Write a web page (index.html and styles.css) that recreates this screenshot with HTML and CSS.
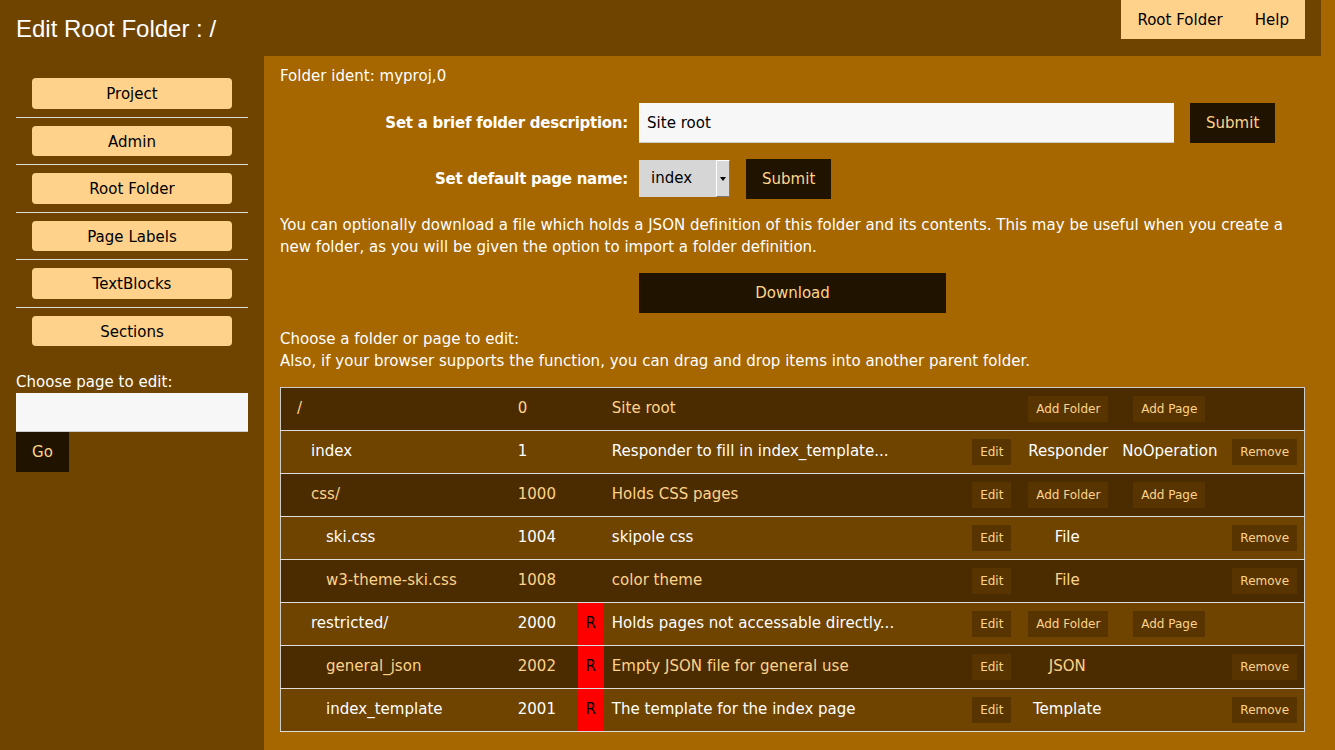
FILE: index.html
```html
<!DOCTYPE html>
<html>
<head>
<meta charset="utf-8">
<title>Edit Root Folder</title>
<link rel="stylesheet" href="styles.css">
</head>
<body>
<div class="page">
  <header class="topbar">
    <h1 class="title">Edit Root Folder : /</h1>
    <nav class="topnav"><a href="#">Root Folder</a><a href="#">Help</a></nav>
  </header>
  <div class="layout">
    <aside class="sidebar">
      <ul class="navlist">
        <li><a class="navbtn" href="#">Project</a></li>
        <li><a class="navbtn" href="#">Admin</a></li>
        <li><a class="navbtn" href="#">Root Folder</a></li>
        <li><a class="navbtn" href="#">Page Labels</a></li>
        <li><a class="navbtn" href="#">TextBlocks</a></li>
        <li><a class="navbtn" href="#">Sections</a></li>
      </ul>
      <div class="choose">
        <div class="choose-label">Choose page to edit:</div>
        <div class="textinput side-input"></div>
        <span class="darkbtn gobtn">Go</span>
      </div>
    </aside>
    <main class="main">
      <div class="ident">Folder ident: myproj,0</div>
      <div class="frow first">
        <div class="flabel">Set a brief folder description:</div>
        <div class="textinput desc-input">Site root</div>
        <span class="darkbtn submit">Submit</span>
      </div>
      <div class="frow">
        <div class="flabel">Set default page name:</div>
        <div class="select"><span class="selval">index</span><span class="selarrow"></span></div>
        <span class="darkbtn submit">Submit</span>
      </div>
      <p class="para para-download">You can optionally download a file which holds a JSON definition of this folder and its contents. This may be useful when you create a new folder, as you will be given the option to import a folder definition.</p>
      <span class="darkbtn download">Download</span>
      <p class="para para-choose">Choose a folder or page to edit:<br>Also, if your browser supports the function, you can drag and drop items into another parent folder.</p>
      <table class="tree">
        <colgroup>
          <col class="c-name"><col class="c-num"><col class="c-r"><col class="c-desc"><col class="c-edit"><col class="c-a"><col class="c-b"><col class="c-rem">
        </colgroup>
        <tr class="dark">
          <td class="name">/</td><td>0</td><td></td><td>Site root</td><td></td>
          <td class="ctr"><span class="tbtn">Add Folder</span></td><td class="ctr"><span class="tbtn">Add Page</span></td><td></td>
        </tr>
        <tr class="light">
          <td class="name lvl1">index</td><td>1</td><td></td><td>Responder to fill in index_template...</td><td><span class="tbtn">Edit</span></td>
          <td class="ctr">Responder</td><td class="ctr">NoOperation</td><td><span class="tbtn">Remove</span></td>
        </tr>
        <tr class="dark">
          <td class="name lvl1">css/</td><td>1000</td><td></td><td>Holds CSS pages</td><td><span class="tbtn">Edit</span></td>
          <td class="ctr"><span class="tbtn">Add Folder</span></td><td class="ctr"><span class="tbtn">Add Page</span></td><td></td>
        </tr>
        <tr class="light">
          <td class="name lvl2">ski.css</td><td>1004</td><td></td><td>skipole css</td><td><span class="tbtn">Edit</span></td>
          <td class="ctr">File</td><td></td><td><span class="tbtn">Remove</span></td>
        </tr>
        <tr class="dark">
          <td class="name lvl2">w3-theme-ski.css</td><td>1008</td><td></td><td>color theme</td><td><span class="tbtn">Edit</span></td>
          <td class="ctr">File</td><td></td><td><span class="tbtn">Remove</span></td>
        </tr>
        <tr class="light">
          <td class="name lvl1">restricted/</td><td>2000</td><td class="rcell">R</td><td>Holds pages not accessable directly...</td><td><span class="tbtn">Edit</span></td>
          <td class="ctr"><span class="tbtn">Add Folder</span></td><td class="ctr"><span class="tbtn">Add Page</span></td><td></td>
        </tr>
        <tr class="dark">
          <td class="name lvl2">general_json</td><td>2002</td><td class="rcell">R</td><td>Empty JSON file for general use</td><td><span class="tbtn">Edit</span></td>
          <td class="ctr">JSON</td><td></td><td><span class="tbtn">Remove</span></td>
        </tr>
        <tr class="light">
          <td class="name lvl2">index_template</td><td>2001</td><td class="rcell">R</td><td>The template for the index page</td><td><span class="tbtn">Edit</span></td>
          <td class="ctr">Template</td><td></td><td><span class="tbtn">Remove</span></td>
        </tr>
      </table>
    </main>
  </div>
</div>
</body>
</html>
```
FILE: styles.css
```css
html, body {
  margin: 0;
  padding: 0;
}
body {
  background: #a66600;
  font-family: "DejaVu Sans", Verdana, sans-serif;
  font-size: 15px;
  line-height: 1.5;
  letter-spacing: 0.02px;
  color: #ffffff;
}
.page {
  width: 1321px;
}
.topbar {
  height: 56px;
  background: #6e4400;
  display: flex;
  justify-content: space-between;
  align-items: flex-start;
  padding: 0 16px;
  box-sizing: border-box;
}
.title {
  margin: 1px 0 0;
  font-family: "Liberation Sans", Arial, sans-serif;
  font-size: 24px;
  font-weight: 400;
  letter-spacing: 0;
  line-height: 56px;
  color: #ffffff;
}
.topnav {
  display: flex;
  background: #ffd28c;
}
.topnav a {
  padding: 9px 16px 7px;
  color: #000000;
  text-decoration: none;
}
.layout {
  display: flex;
  min-height: 694px;
}
.sidebar {
  width: 264px;
  flex: none;
  background: #6e4400;
  padding: 14px 16px 0;
  box-sizing: border-box;
}
.navlist {
  list-style: none;
  margin: 0;
  padding: 0;
}
.navlist li {
  padding: 8px 16px;
  border-bottom: 1px solid #dddddd;
}
.navlist li:last-child {
  border-bottom: none;
}
.navbtn {
  display: block;
  background: #ffd28c;
  color: #000000;
  text-align: center;
  text-decoration: none;
  padding: 5px 4px 3px;
  border-radius: 4px;
}
.choose {
  margin-top: 16px;
}
.choose-label {
  padding-top: 1px;
  margin-bottom: -1px;
}
.textinput {
  background: #f7f7f7;
  border-bottom: 1px solid #cccccc;
  color: #000000;
  padding: 8px;
  height: 22.5px;
}
.darkbtn {
  display: inline-block;
  background: #201400;
  color: #ffd38a;
  padding: 9px 16px 8px;
  text-align: center;
}
.main {
  flex: 1;
  padding: 8px 16px 16px;
}
.ident {
  padding-top: 1px;
  margin-bottom: -1px;
}
.frow {
  display: flex;
  align-items: center;
  margin-top: 16.5px;
}
.flabel {
  width: 348px;
  margin-right: 11px;
  text-align: right;
  font-weight: bold;
  letter-spacing: -0.26px;
}
.desc-input {
  width: 519px;
  margin-right: 16px;
  padding-top: 9px;
  padding-bottom: 7px;
}
.select {
  width: 91px;
  height: 37px;
  background: #d6d6d6;
  display: flex;
  margin-right: 16px;
  box-sizing: border-box;
}
.selval {
  flex: 1;
  padding-left: 12px;
  line-height: 37px;
  color: #000000;
}
.selarrow {
  width: 12px;
  background: #d9d9d9;
  border: 1px solid;
  border-color: #ffffff #7a7a7a #7a7a7a #ffffff;
  position: relative;
}
.selarrow::after {
  content: "";
  position: absolute;
  left: 3px;
  top: 16px;
  border-left: 3px solid transparent;
  border-right: 3px solid transparent;
  border-top: 4px solid #000000;
}
.para {
  margin: 15px 0;
}
.para-download {
  margin-bottom: 14.5px;
}
.para-choose {
  margin-bottom: 14px;
}
.download {
  display: block;
  width: 307px;
  box-sizing: border-box;
  margin: 0 auto;
}
.tree {
  width: 100%;
  border-collapse: collapse;
  table-layout: fixed;
  border: 1px solid #cccccc;
}
.tree tr {
  border-bottom: 1px solid #dddddd;
}
.tree td {
  padding: 8px;
  vertical-align: middle;
  white-space: nowrap;
  overflow: hidden;
}
.c-name { width: 229px; }
.c-num { width: 68px; }
.c-r { width: 26px; }
.c-desc { width: 360px; }
.c-edit { width: 56px; }
.c-a { width: 94px; }
.c-b { width: 110px; }
.c-rem { width: 80px; }
.tree .name { padding-left: 16px; }
.tree .lvl1 { padding-left: 30px; }
.tree .lvl2 { padding-left: 45px; }
.tree .ctr { text-align: center; }
.dark {
  background: #4a2c00;
  color: #ffd38a;
}
.light {
  background: #6e4400;
  color: #ffffff;
}
.tree .rcell {
  background: #ff0000;
  color: #000000;
  text-align: center;
  padding: 8px 0;
}
.tbtn {
  display: inline-block;
  background: #583500;
  color: #ffd38a;
  font-size: 12px;
  line-height: 18px;
  letter-spacing: 0;
  padding: 4px 8px;
}
```
